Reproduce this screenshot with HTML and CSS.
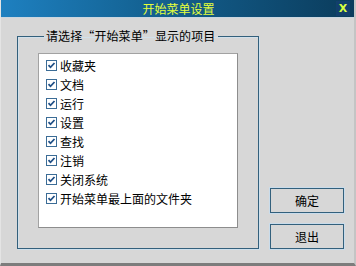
FILE: index.html
```html
<!DOCTYPE html>
<html lang="zh-CN">
<head>
<meta charset="utf-8">
<title>开始菜单设置</title>
<link rel="stylesheet" href="styles.css">
</head>
<body>
<div class="window">
  <div class="titlebar">
    <span class="title">开始菜单设置</span>
    <span class="close">X</span>
  </div>
  <div class="content">
    <fieldset class="group">
      <legend class="legend">请选择“开始菜单”显示的项目</legend>
      <ul class="list">
        <li class="item"><svg class="cb" width="11" height="11" viewBox="0 0 11 11"><rect x="0.5" y="0.5" width="10" height="10" fill="#fff" stroke="#3b6c96"/><path d="M2.5 5.2 L4.5 7.3 L8.5 3" fill="none" stroke="#1f4f86" stroke-width="1.8"/></svg><span>收藏夹</span></li>
        <li class="item"><svg class="cb" width="11" height="11" viewBox="0 0 11 11"><rect x="0.5" y="0.5" width="10" height="10" fill="#fff" stroke="#3b6c96"/><path d="M2.5 5.2 L4.5 7.3 L8.5 3" fill="none" stroke="#1f4f86" stroke-width="1.8"/></svg><span>文档</span></li>
        <li class="item"><svg class="cb" width="11" height="11" viewBox="0 0 11 11"><rect x="0.5" y="0.5" width="10" height="10" fill="#fff" stroke="#3b6c96"/><path d="M2.5 5.2 L4.5 7.3 L8.5 3" fill="none" stroke="#1f4f86" stroke-width="1.8"/></svg><span>运行</span></li>
        <li class="item"><svg class="cb" width="11" height="11" viewBox="0 0 11 11"><rect x="0.5" y="0.5" width="10" height="10" fill="#fff" stroke="#3b6c96"/><path d="M2.5 5.2 L4.5 7.3 L8.5 3" fill="none" stroke="#1f4f86" stroke-width="1.8"/></svg><span>设置</span></li>
        <li class="item"><svg class="cb" width="11" height="11" viewBox="0 0 11 11"><rect x="0.5" y="0.5" width="10" height="10" fill="#fff" stroke="#3b6c96"/><path d="M2.5 5.2 L4.5 7.3 L8.5 3" fill="none" stroke="#1f4f86" stroke-width="1.8"/></svg><span>查找</span></li>
        <li class="item"><svg class="cb" width="11" height="11" viewBox="0 0 11 11"><rect x="0.5" y="0.5" width="10" height="10" fill="#fff" stroke="#3b6c96"/><path d="M2.5 5.2 L4.5 7.3 L8.5 3" fill="none" stroke="#1f4f86" stroke-width="1.8"/></svg><span>注销</span></li>
        <li class="item"><svg class="cb" width="11" height="11" viewBox="0 0 11 11"><rect x="0.5" y="0.5" width="10" height="10" fill="#fff" stroke="#3b6c96"/><path d="M2.5 5.2 L4.5 7.3 L8.5 3" fill="none" stroke="#1f4f86" stroke-width="1.8"/></svg><span>关闭系统</span></li>
        <li class="item"><svg class="cb" width="11" height="11" viewBox="0 0 11 11"><rect x="0.5" y="0.5" width="10" height="10" fill="#fff" stroke="#3b6c96"/><path d="M2.5 5.2 L4.5 7.3 L8.5 3" fill="none" stroke="#1f4f86" stroke-width="1.8"/></svg><span>开始菜单最上面的文件夹</span></li>
      </ul>
    </fieldset>
    <div class="buttons">
      <button class="btn">确定</button>
      <button class="btn">退出</button>
    </div>
  </div>
</div>
</body>
</html>
```

FILE: styles.css
```css
html, body {
  margin: 0;
  padding: 0;
}
body {
  font-family: "Noto Sans CJK SC", "Liberation Sans", sans-serif;
  font-size: 12px;
  color: #000;
  background: #d7d7d7;
}
.window {
  width: 356px;
  height: 266px;
  box-sizing: border-box;
  background: #d7d7d7;
  border-bottom: 3px solid #7c7c7c;
  border-left: 1px solid #e4e4e4;
  border-right: 2px solid #c4c4c4;
  display: flex;
  flex-direction: column;
}
.titlebar {
  height: 17px;
  flex: none;
  background: linear-gradient(to right, #1e80c0 0%, #146394 40%, #0b3c5c 100%);
  display: flex;
  align-items: center;
  justify-content: center;
  position: relative;
  border-bottom: 1px solid #c9d6e0;
}
.title {
  color: #e4ff3a;
  font-size: 12px;
  line-height: 17px;
  margin-left: 2px;
}
.close {
  position: absolute;
  right: 4px;
  top: 1px;
  width: 14px;
  height: 15px;
  line-height: 15px;
  text-align: center;
  color: #d8ff40;
  font-family: "DejaVu Sans", sans-serif;
  font-weight: bold;
  font-size: 11px;
  background: #123f6c;
}
.content {
  flex: 1;
  display: flex;
  align-items: flex-start;
  padding: 11px 0 0 16px;
}
.group {
  margin: 0;
  width: 242px;
  height: 220px;
  box-sizing: border-box;
  border: 1px solid #33607c;
  box-shadow: inset 1px 1px 0 #d2e0ea, 1px 1px 0 #cfe0ec;
  padding: 10px 0 0 20px;
}
.legend {
  padding: 0 3px 0 2px;
  margin-left: 6px;
  line-height: 14px;
  font-size: 12px;
  letter-spacing: 0.1px;
}
.list {
  list-style: none;
  margin: 0;
  padding: 2px 0 0 7px;
  width: 200px;
  height: 175px;
  box-sizing: border-box;
  background: #fff;
  border: 1px solid #a2a2a2;
  border-right-color: #8d8d8d;
  border-bottom-color: #8d8d8d;
}
.item {
  height: 19px;
  display: flex;
  align-items: center;
  gap: 3px;
  line-height: 19px;
}
.cb {
  flex: none;
  display: block;
}
.buttons {
  display: flex;
  flex-direction: column;
  gap: 11px;
  margin: 159px 0 0 11px;
}
.btn {
  width: 74px;
  height: 25px;
  box-sizing: border-box;
  background: #d7d7d7;
  border: 1px solid #33607c;
  box-shadow: 0 0 0 1px #c9dceb;
  font-family: "Noto Sans CJK SC", sans-serif;
  font-size: 12px;
  color: #000;
  padding: 0;
  margin: 0;
}
```
